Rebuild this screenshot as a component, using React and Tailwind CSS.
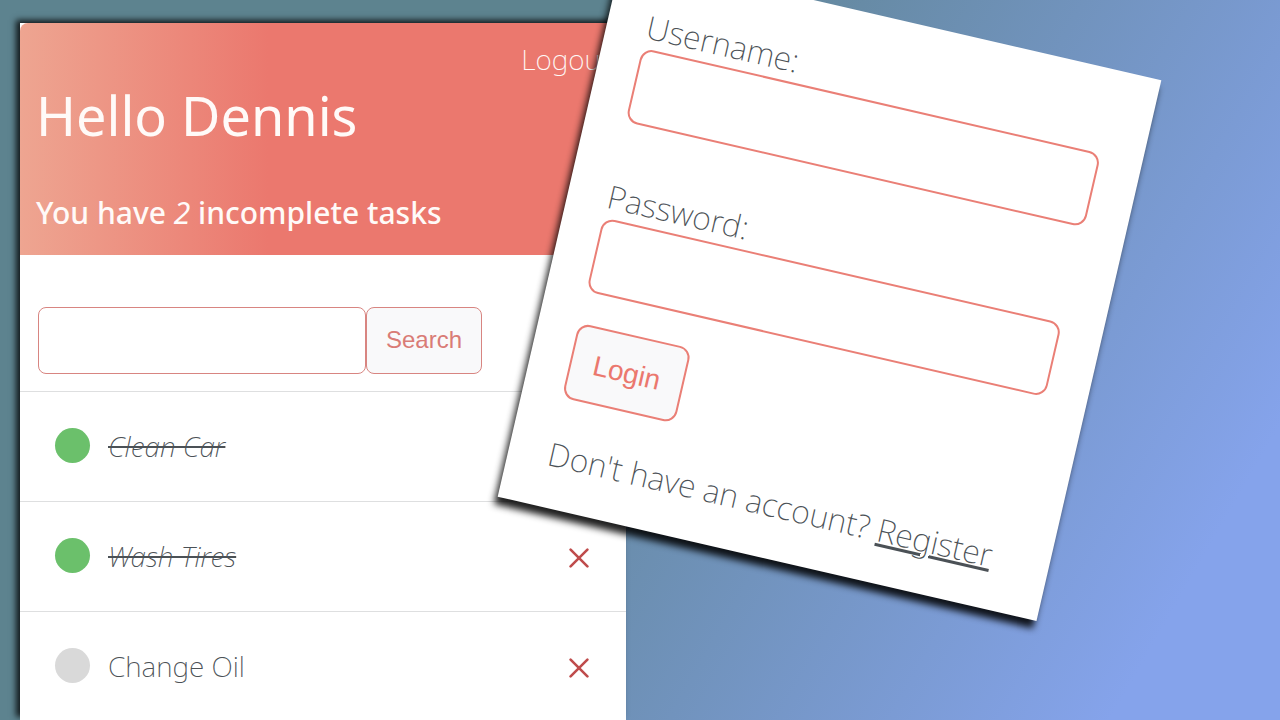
import React, { useState } from 'react';

const initialTasks = [
  { id: 1, title: 'Clean Car', complete: true },
  { id: 2, title: 'Wash Tires', complete: true },
  { id: 3, title: 'Change Oil', complete: false },
];

function CrossIcon() {
  return (
    <svg width="20" height="20" viewBox="0 0 20 20" fill="none" stroke="#bf4c4c" strokeWidth="2.6" strokeLinecap="round" aria-hidden="true">
      <path d="M1.6 1.6 18.4 18.4M18.4 1.6 1.6 18.4" />
    </svg>
  );
}

function Header({ count }) {
  return (
    <header className="flex h-[232px] flex-col rounded-tl-lg bg-[linear-gradient(90deg,#eea591_0%,#eb786e_41%)] px-4 pt-4 text-[#fffaf8]">
      <a href="#logout" className="self-end text-[28px] leading-10 font-extralight">Logout</a>
      <h1 className="text-[54px] leading-[72px]">Hello Dennis</h1>
      <h2 className="mt-10 text-[30px] leading-11 font-medium">
        You have <i className="font-normal">{count}</i> incomplete tasks
      </h2>
    </header>
  );
}

function TaskRow({ task }) {
  return (
    <li className="flex h-[110px] items-center border-t border-[#dedfe0] pr-[37px] pb-0.5 pl-[35px]">
      <span className={task.complete ? 'size-[35px] rounded-full bg-[#6bc06b]' : 'size-[35px] rounded-full bg-[#d9d9d9]'} />
      <a
        href={'#task-' + task.id}
        className={
          task.complete
            ? 'ml-[18px] text-[28px] leading-9 font-extralight italic line-through decoration-2'
            : 'ml-[18px] text-[28px] leading-9 font-extralight'
        }
      >
        {task.title}
      </a>
      <button type="button" aria-label={'Delete ' + task.title} className="mt-1 ml-auto">
        <CrossIcon />
      </button>
    </li>
  );
}

function TaskPanel() {
  const [tasks] = useState(initialTasks);
  return (
    <section className="mt-[23px] ml-5 w-[47.35%] bg-white shadow-[-4px_-3px_6px_rgba(0,0,0,0.8)]">
      <Header count={2} />
      <form className="flex px-[18px] pt-[52px] pb-[17px]" onSubmit={(e) => e.preventDefault()}>
        <input aria-label="Search tasks" className="h-[67px] w-[328px] rounded-lg border border-[#d88581] bg-white px-4 text-2xl" />
        <button type="submit" className="h-[67px] w-[116px] rounded-lg border border-[#d88581] bg-[#f9f9fa] pb-0.5 font-['Liberation_Sans',sans-serif] text-2xl text-[#d97c76]">
          Search
        </button>
      </form>
      <ul>
        {tasks.map((task) => (
          <TaskRow key={task.id} task={task} />
        ))}
      </ul>
    </section>
  );
}

function Field({ id, label, type }) {
  return (
    <div className="flex flex-col">
      <label htmlFor={id} className="text-[32px] leading-11 font-extralight">{label}</label>
      <input id={id} type={type} className="h-[76px] w-full rounded-xl border-2 border-[#ea7f76] bg-white px-4 text-2xl" />
    </div>
  );
}

function LoginCard() {
  return (
    <section className="absolute top-[11px] left-[553px] w-[553px] rotate-[13deg] bg-white pt-[41px] pr-[42px] pb-8 pl-10 shadow-[-2px_8px_7px_rgba(0,0,0,0.88)]">
      <form className="flex flex-col" onSubmit={(e) => e.preventDefault()}>
        <div className="flex flex-col gap-[54px]">
          <Field id="username" label="Username:" type="text" />
          <Field id="password" label="Password:" type="password" />
        </div>
        <button type="submit" className="mt-8 h-[77px] w-[116px] rounded-xl border-2 border-[#ea7f76] bg-[#f9f9fa] font-['Liberation_Sans',sans-serif] text-[28px] text-[#eb786e]">
          Login
        </button>
      </form>
      <p className="mt-[35px] text-[32px] leading-11 font-extralight whitespace-nowrap">
        Don't have an account? <a href="#register" className="underline decoration-[3px] underline-offset-2">Register</a>
      </p>
    </section>
  );
}

export default function App() {
  return (
    <main className="relative flex h-screen overflow-hidden bg-[linear-gradient(120deg,#5d838f_38%,#85a3eb_90%)] font-['Noto_Sans',sans-serif] text-[#4b5156]">
      <TaskPanel />
      <LoginCard />
    </main>
  );
}
